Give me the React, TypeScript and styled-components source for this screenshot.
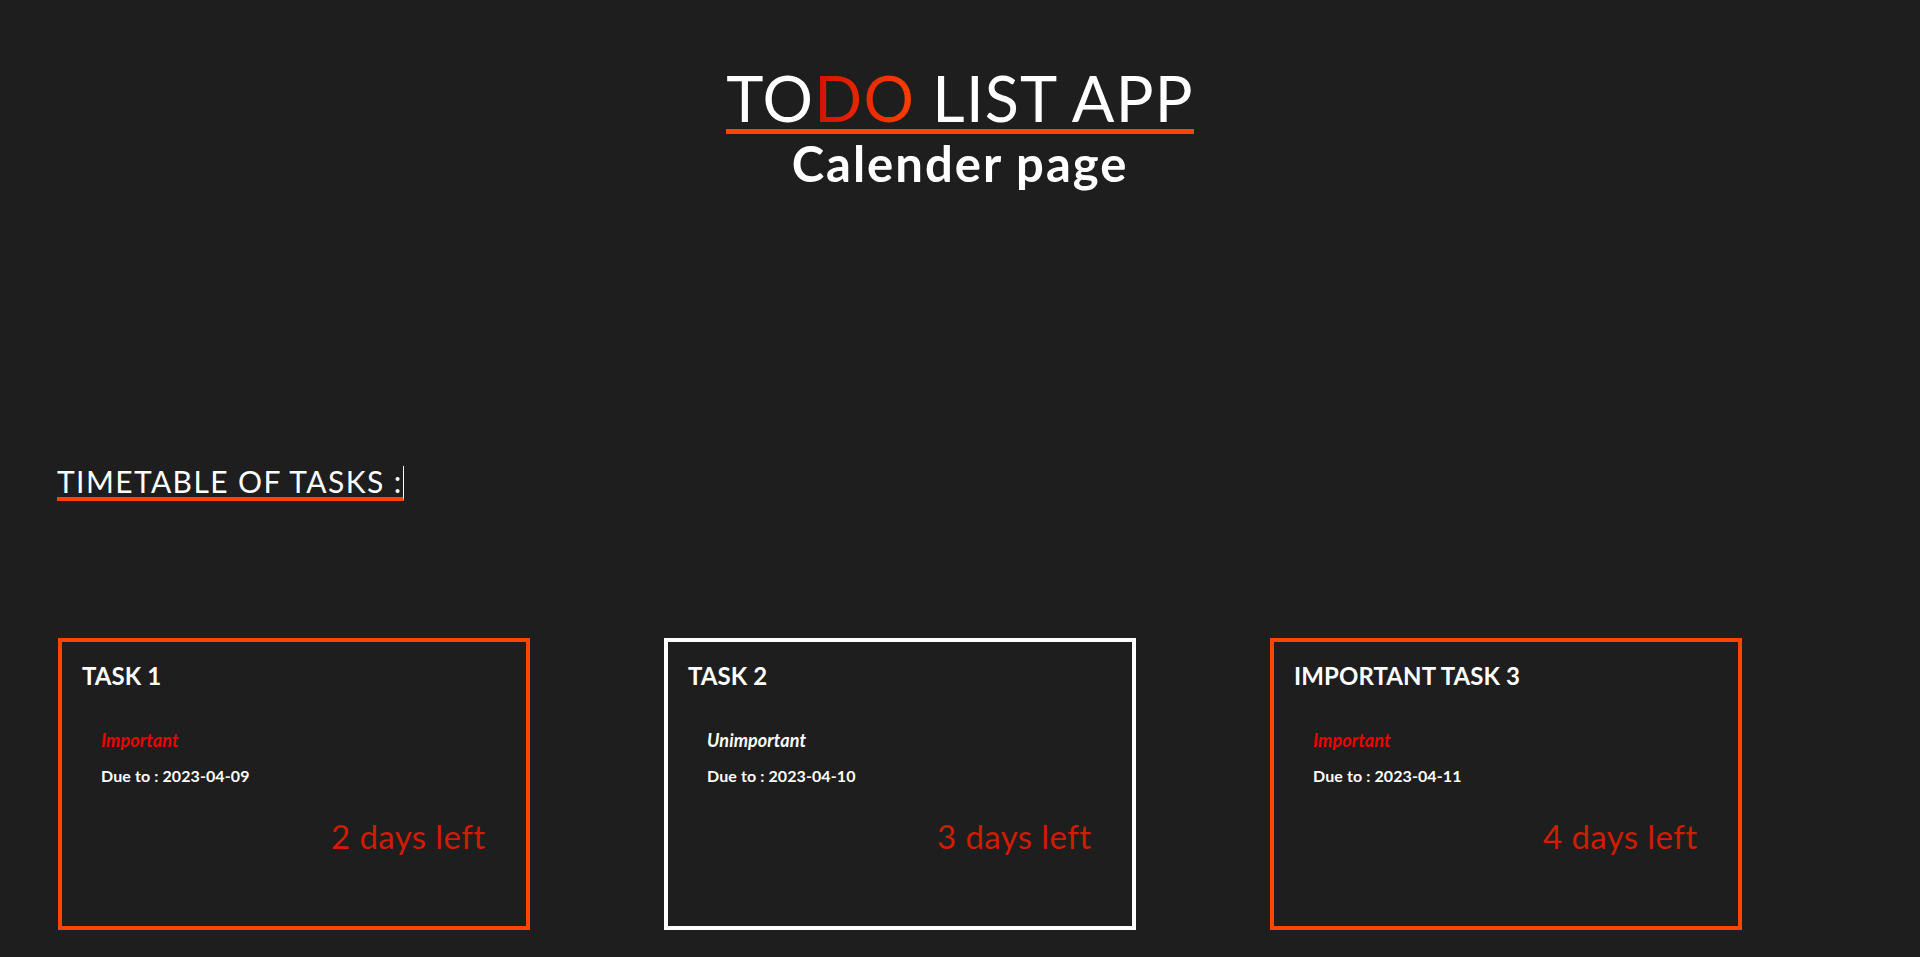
import React from "react";
import styled, { createGlobalStyle } from "styled-components";

const GlobalStyle = createGlobalStyle`
  html, body {
    margin: 0;
    padding: 0;
    background: #1e1e1e;
  }
  body {
    font-family: Lato, "Open Sans", "Liberation Sans", sans-serif;
    color: #ffffff;
  }
  ::-webkit-scrollbar {
    width: 5px;
  }
  ::-webkit-scrollbar-track {
    background: #1e1e1e;
    margin-top: 72px;
    margin-bottom: 72px;
  }
  ::-webkit-scrollbar-thumb {
    background: #8e8e8e;
    border-right: 3px solid #1e1e1e;
  }
`;

const Page = styled.div`
  min-height: 1440px;
  box-sizing: border-box;
`;

const Header = styled.header`
  display: flex;
  flex-direction: column;
  align-items: center;
  padding-top: 66px;
`;

const AppTitle = styled.h1`
  margin: 0;
  font-size: 63px;
  line-height: 63px;
  font-weight: 400;
  letter-spacing: 1.2px;
  border-bottom: 5px solid #ff4500;
  color: #ffffff;
`;

const Accent = styled.span`
  background: linear-gradient(90deg, #d41000 0%, #ff4000 100%);
  -webkit-background-clip: text;
  background-clip: text;
  color: transparent;
`;

const PageName = styled.h2`
  margin: 0;
  font-size: 49px;
  line-height: 59px;
  font-weight: 700;
  letter-spacing: 2px;
  color: #ffffff;
`;

const Section = styled.section`
  padding: 273px 0 0 57px;
`;

const SectionTitle = styled.h3`
  display: inline-block;
  margin: 0;
  font-size: 30px;
  line-height: 31px;
  font-weight: 400;
  letter-spacing: 1.4px;
  border-bottom: 4px solid #ff4500;
  border-right: 1px solid #ffffff;
`;

const CardRow = styled.div`
  display: flex;
  gap: 134px;
  margin-top: 137px;
  margin-left: 1px;
`;

const Card = styled.article<{ $important: boolean }>`
  box-sizing: border-box;
  width: 472px;
  height: 292px;
  border: 4px solid ${(p) => (p.$important ? "#ff4500" : "#ffffff")};
  padding: 19px 20px 0 20px;
  display: flex;
  flex-direction: column;
`;

const CardTitle = styled.h4`
  margin: 0;
  font-size: 24px;
  line-height: 30px;
  font-weight: 700;
  letter-spacing: 0.1px;
  color: #ffffff;
`;

const Meta = styled.div`
  display: flex;
  flex-direction: column;
  gap: 15px;
  padding: 39px 0 0 19px;
`;

const Priority = styled.span<{ $important: boolean }>`
  font-size: 18px;
  line-height: 21px;
  font-style: italic;
  font-weight: 700;
  letter-spacing: 0.1px;
  color: ${(p) => (p.$important ? "#ee0000" : "#ffffff")};
`;

const Due = styled.span`
  font-size: 16px;
  line-height: 20px;
  font-weight: 700;
  letter-spacing: 0.1px;
  color: #ffffff;
`;

const DaysLeft = styled.div`
  margin-top: 31px;
  padding-left: 249px;
  font-size: 33px;
  line-height: 38px;
  font-weight: 400;
  letter-spacing: 0.4px;
  color: #d01c00;
`;

type Task = {
  title: string;
  important: boolean;
  due: string;
  days: number;
};

const tasks: Task[] = [
  { title: "TASK 1", important: true, due: "2023-04-09", days: 2 },
  { title: "TASK 2", important: false, due: "2023-04-10", days: 3 },
  { title: "IMPORTANT TASK 3", important: true, due: "2023-04-11", days: 4 },
];

export default function App() {
  return (
    <>
      <GlobalStyle />
      <Page>
        <Header>
          <AppTitle>
            TO<Accent>DO</Accent> LIST APP
          </AppTitle>
          <PageName>Calender page</PageName>
        </Header>
        <Section>
          <SectionTitle>TIMETABLE OF TASKS :</SectionTitle>
          <CardRow>
            {tasks.map((t) => (
              <Card key={t.title} $important={t.important}>
                <CardTitle>{t.title}</CardTitle>
                <Meta>
                  <Priority $important={t.important}>
                    {t.important ? "Important" : "Unimportant"}
                  </Priority>
                  <Due>Due to : {t.due}</Due>
                </Meta>
                <DaysLeft>{t.days} days left</DaysLeft>
              </Card>
            ))}
          </CardRow>
        </Section>
      </Page>
    </>
  );
}
